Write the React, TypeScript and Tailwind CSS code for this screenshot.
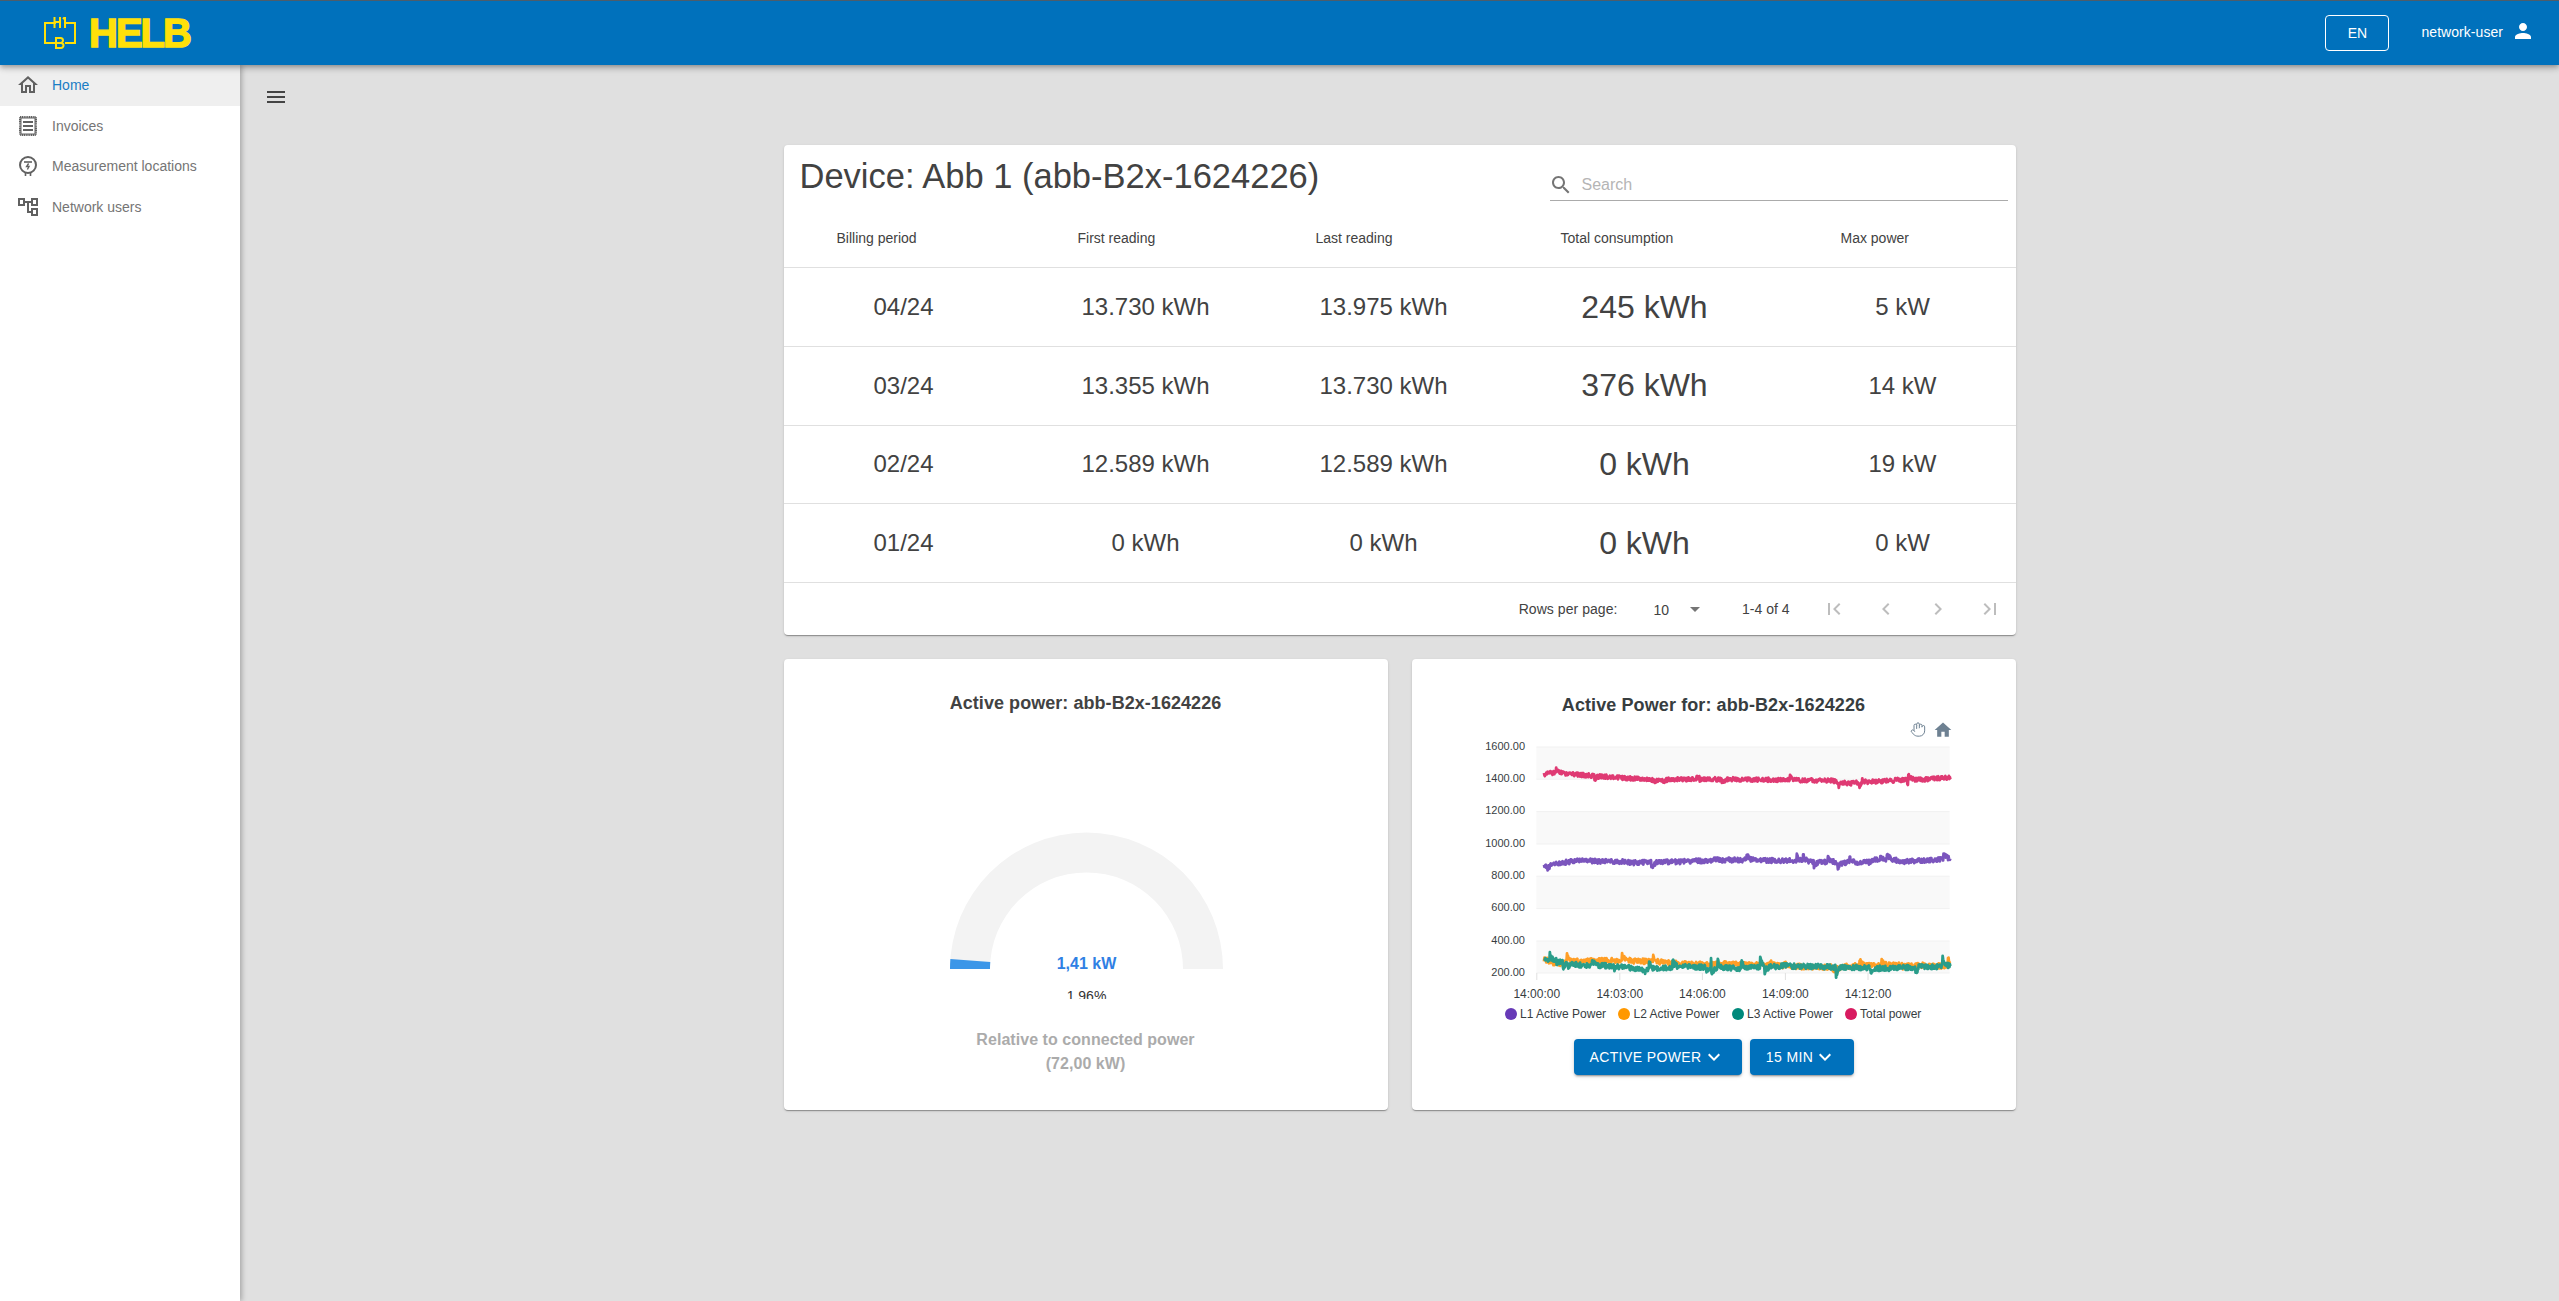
import { Hand } from "lucide-react";

const FONT = "font-['Liberation_Sans',Arial,sans-serif]";
const CARD_SHADOW = "shadow-[0_2px_1px_-1px_rgba(0,0,0,0.2),0_1px_1px_0_rgba(0,0,0,0.14),0_1px_3px_0_rgba(0,0,0,0.12)]";
const BTN_CLASS =
  "flex h-9 items-center justify-center rounded bg-[#0071bc] text-sm tracking-[0.4px] text-white shadow-[0_3px_1px_-2px_rgba(0,0,0,0.2),0_2px_2px_0_rgba(0,0,0,0.14),0_1px_5px_0_rgba(0,0,0,0.12)]";

const navItems = [
  { label: "Home", active: true, icon: "home" },
  { label: "Invoices", active: false, icon: "invoice" },
  { label: "Measurement locations", active: false, icon: "meter" },
  { label: "Network users", active: false, icon: "tree" },
];

const rows = [
  ["04/24", "13.730 kWh", "13.975 kWh", "245 kWh", "5 kW"],
  ["03/24", "13.355 kWh", "13.730 kWh", "376 kWh", "14 kW"],
  ["02/24", "12.589 kWh", "12.589 kWh", "0 kWh", "19 kW"],
  ["01/24", "0 kWh", "0 kWh", "0 kWh", "0 kW"],
];

const NavIcon = ({ name }: { name: string }) => {
  if (name === "home") {
    return (
      <svg width="24" height="24" viewBox="0 0 24 24" fill="#616161">
        <path d="M12 5.69l5 4.5V18h-2v-6H9v6H7v-7.81l5-4.5M12 3L2 12h3v8h6v-6h2v6h6v-8h3L12 3z" />
      </svg>
    );
  }
  if (name === "invoice") {
    return (
      <svg width="24" height="24" viewBox="0 0 24 24" fill="none" stroke="#616161">
        <rect x="4" y="3" width="16" height="18" strokeWidth="2" strokeDasharray="1.2 0.6" />
        <rect x="5" y="4" width="14" height="16" strokeWidth="1" />
        <path d="M7 8h10M7 12h10M7 16h10" strokeWidth="2" />
      </svg>
    );
  }
  if (name === "meter") {
    return (
      <svg width="24" height="24" viewBox="0 0 24 24" fill="none" stroke="#616161">
        <circle cx="12" cy="11" r="8" strokeWidth="2" />
        <path d="M8 8h8" strokeWidth="1.6" />
        <path d="M12.6 9.5l-2 3h2.4l-1.6 3" strokeWidth="1.4" />
        <path d="M9.5 19v3M14.5 19v3" strokeWidth="1.6" />
      </svg>
    );
  }
  return (
    <svg width="24" height="24" viewBox="0 0 24 24" fill="#616161">
      <path d="M22 11V3h-7v3H9V3H2v8h7V8h2v10h4v3h7v-8h-7v3h-2V8h2v3h7zM7 9H4V5h3v4zm10 6h3v4h-3v-4zm0-10h3v4h-3V5z" />
    </svg>
  );
};

const Logo = () => (
  <svg width="32" height="32" viewBox="0 0 32 32" fill="none" stroke="#ffe009" className="shrink-0">
    <path d="M12 6H1v20h10M21 26h10V6H20" strokeWidth="2" />
    <path d="M10.5 0v11M16 0v11M10.5 5H16M21 0v11M19 2l2-2" strokeWidth="2" />
    <path d="M12 21h4.5a2.2 2.2 0 0 1 0 5H12zM12 26h5a2.5 2.5 0 0 1 0 5h-5zM12 20v12" strokeWidth="2" />
  </svg>
);

const PagerIcon = ({ d }: { d: string }) => (
  <span className="flex w-[52px] justify-center">
    <svg width="24" height="24" viewBox="0 0 24 24" fill="#bdbdbd">
      <path d={d} />
    </svg>
  </span>
);

const ArrowDown = () => (
  <svg width="24" height="24" viewBox="0 0 24 24" fill="#ffffff">
    <path d="M7.41 8.59L12 13.17l4.59-4.58L18 10l-6 6-6-6 1.41-1.41z" />
  </svg>
);

// reference curves, read off the picture, with jitter laid over them
type Pt = [number, number];
const toPlot = ([zx, zy]: Pt): Pt => [1440 + zx / 2.904 - 1412, 680 + zy / 3 - 717];

const curves: { color: string; pts: Pt[]; seed: number; amp: number; spike: number }[] = [
  {
    color: "#7b55bd",
    seed: 11,
    amp: 2.4,
    spike: 22,
    pts: [[302, 560], [340, 552], [400, 540], [470, 545], [530, 545], [560, 548], [700, 545], [800, 540], [900, 540], [1000, 542], [1100, 545], [1230, 548], [1280, 535], [1350, 545], [1482, 535]],
  },
  {
    color: "#ff9e26",
    seed: 23,
    amp: 2.6,
    spike: 20,
    pts: [[302, 838], [340, 852], [400, 842], [550, 842], [620, 845], [700, 852], [850, 852], [1000, 858], [1100, 862], [1300, 855], [1482, 858]],
  },
  {
    color: "#2a9d8a",
    seed: 37,
    amp: 2.6,
    spike: 22,
    pts: [[302, 835], [350, 845], [400, 855], [520, 858], [590, 870], [700, 860], [860, 865], [1000, 858], [1200, 862], [1300, 865], [1482, 858]],
  },
  {
    color: "#df3a73",
    seed: 51,
    amp: 2.1,
    spike: 14,
    pts: [[302, 285], [320, 278], [400, 284], [480, 290], [560, 296], [620, 300], [700, 298], [850, 298], [1000, 300], [1140, 302], [1190, 310], [1250, 305], [1400, 298], [1482, 293]],
  },
];

const buildLine = (pts: Pt[], seed: number, amp: number, spikeSize: number) => {
  const plot = pts.map(toPlot);
  let state = seed * 7919;
  const rand = () => {
    state = (state * 16807) % 2147483647;
    return state / 2147483647;
  };
  const out: string[] = [];
  const x0 = plot[0][0];
  const x1 = plot[plot.length - 1][0];
  const steps = 900;
  let seg = 0;
  let spike = 0;
  for (let i = 0; i <= steps; i++) {
    const x = x0 + ((x1 - x0) * i) / steps;
    while (seg < plot.length - 2 && x > plot[seg + 1][0]) seg++;
    const [ax, ay] = plot[seg];
    const [bx, by] = plot[seg + 1];
    const base = ay + ((by - ay) * (x - ax)) / (bx - ax);
    if (rand() > 0.982) spike = (rand() - 0.5) * spikeSize;
    spike *= 0.8;
    const y = base + (rand() - 0.5) * amp * 2 + spike;
    out.push(`${x.toFixed(2)},${y.toFixed(2)}`);
  }
  return out.join(" ");
};

const lines = curves.map((c) => ({ color: c.color, points: buildLine(c.pts, c.seed, c.amp, c.spike) }));

const yLabels = ["1600.00", "1400.00", "1200.00", "1000.00", "800.00", "600.00", "400.00", "200.00"];
const gridYs = [30, 62.2, 94.6, 127, 159.2, 191.6, 224, 256];
const xTicks = [
  { x: 124.8, label: "14:00:00" },
  { x: 207.8, label: "14:03:00" },
  { x: 290.4, label: "14:06:00" },
  { x: 373.4, label: "14:09:00" },
  { x: 456, label: "14:12:00" },
];
const legend = [
  { cx: 99, tx: 108, color: "#673ab7", label: "L1 Active Power" },
  { cx: 212, tx: 221.5, color: "#ff9800", label: "L2 Active Power" },
  { cx: 326, tx: 335, color: "#00897b", label: "L3 Active Power" },
  { cx: 439, tx: 448, color: "#d81b60", label: "Total power" },
];

const LineChart = () => (
  <svg width="604" height="308" viewBox="0 0 604 308" className="block" fontFamily="'Liberation Sans', Arial, sans-serif">
    {gridYs.slice(0, -1).map((y, i) =>
      i % 2 === 0 ? <rect key={y} x="124.4" y={y} width="413.2" height={gridYs[i + 1] - y} fill="#f9f9f9" /> : null
    )}
    {gridYs.map((y) => (
      <line key={y} x1="124.4" x2="537.6" y1={y} y2={y} stroke="#f1f1f1" strokeWidth="1" />
    ))}
    {yLabels.map((label, i) => (
      <text key={label} x="113" y={gridYs[i] + 2.5} textAnchor="end" fontSize="11" fill="#373d3f">
        {label}
      </text>
    ))}
    {xTicks.map((t) => (
      <g key={t.label}>
        <line x1={t.x} x2={t.x} y1="256" y2="263" stroke="#e0e0e0" />
        <text x={t.x} y="281" textAnchor="middle" fontSize="12" fill="#373d3f">
          {t.label}
        </text>
      </g>
    ))}
    {lines.map((l) => (
      <polyline key={l.color} points={l.points} fill="none" stroke={l.color} strokeWidth="2.8" strokeLinejoin="round" />
    ))}
    {legend.map((l) => (
      <g key={l.label}>
        <circle cx={l.cx} cy="297" r="6" fill={l.color} />
        <text x={l.tx} y="301" fontSize="12" fill="#373d3f">
          {l.label}
        </text>
      </g>
    ))}
    <Hand x={498} y={4.5} width={16} height={16} stroke="#6e8192" strokeWidth={1.5} fill="#ffffff" />
    <svg x="521" y="3" width="20" height="20" viewBox="0 0 24 24" fill="#6e8192">
      <path d="M10 20v-6h4v6h5v-8h3L12 3 2 12h3v8z" />
    </svg>
  </svg>
);

const Gauge = () => {
  const cx = 302.5;
  const cy = 190;
  const R = 136.5;
  const r = 96.5;
  const angle = (4.2 * Math.PI) / 180;
  return (
    <svg width="604" height="220" viewBox="0 0 604 220" className="block" fontFamily="'Liberation Sans', Arial, sans-serif">
      <path d={`M${cx - R} ${cy}A${R} ${R} 0 0 1 ${cx + R} ${cy}L${cx + r} ${cy}A${r} ${r} 0 0 0 ${cx - r} ${cy}Z`} fill="#f3f3f3" />
      <path
        d={`M${cx - R} ${cy}A${R} ${R} 0 0 1 ${cx - R * Math.cos(angle)} ${cy - R * Math.sin(angle)}L${cx - r * Math.cos(angle)} ${cy - r * Math.sin(angle)}A${r} ${r} 0 0 0 ${cx - r} ${cy}Z`}
        fill="#3b96e8"
      />
      <text x={cx} y="190" textAnchor="middle" fontSize="16" fontWeight="700" fill="#2f80e4">
        1,41 kW
      </text>
      <text x={cx} y="222" textAnchor="middle" fontSize="14" fill="#333333">
        1,96%
      </text>
    </svg>
  );
};

const App = () => {
  return (
    <div className={`flex h-screen flex-col overflow-hidden bg-[#e0e0e0] ${FONT}`}>
      <header className="relative z-20 flex h-[65px] shrink-0 items-center border-t border-[#4d5d6b] bg-[#0071bc] shadow-[0_2px_4px_-1px_rgba(0,0,0,0.2),0_4px_5px_0_rgba(0,0,0,0.14),0_1px_10px_0_rgba(0,0,0,0.12)]">
        <div className="ml-[44px]">
          <Logo />
        </div>
        <span className="ml-[13px] text-[40px] leading-none font-bold tracking-[-2px] text-[#ffe009] [-webkit-text-stroke:1.4px_#ffe009]">
          HELB
        </span>
        <div className="ml-auto flex items-center">
          <button className="h-9 w-16 rounded border border-white text-sm text-white">EN</button>
          <span className="ml-[32px] pb-[2px] text-sm tracking-[0.05px] text-white">network-user</span>
          <span className="mr-[24px] ml-[8px] -translate-y-[2px]">
            <svg width="24" height="24" viewBox="0 0 24 24" fill="#ffffff">
              <path d="M12 12c2.21 0 4-1.79 4-4s-1.79-4-4-4-4 1.79-4 4 1.79 4 4 4zm0 2c-2.67 0-8 1.34-8 4v2h16v-2c0-2.66-5.33-4-8-4z" />
            </svg>
          </span>
        </div>
      </header>

      <div className="flex min-h-0 flex-1">
        <aside className="relative z-10 w-[240px] shrink-0 bg-white shadow-[2px_0_5px_rgba(0,0,0,0.25)]">
          {navItems.map((item) => (
            <div
              key={item.label}
              className={`flex h-[40.5px] items-center pl-[16px] text-sm ${item.active ? "bg-[#efefef] text-[#1a7dc4]" : "text-[#757575]"}`}
            >
              <NavIcon name={item.icon} />
              <span className="ml-[12px]">{item.label}</span>
            </div>
          ))}
        </aside>

        <main className="min-w-0 flex-1">
          <div className="pt-[20px] pl-[24px]">
            <svg width="24" height="24" viewBox="0 0 24 24" fill="#444444" className="block">
              <path d="M3 18h18v-2H3v2zm0-5h18v-2H3v2zm0-7v2h18V6H3z" />
            </svg>
          </div>

          <div className="mx-auto mt-[36px] w-[1232px]">
            <section className={`rounded bg-white text-[#424242] ${CARD_SHADOW}`}>
              <div className="flex h-[64px] items-start justify-between">
                <h1 className="pt-[11px] pl-[16px] text-[34.5px] leading-[40px] font-normal">Device: Abb 1 (abb-B2x-1624226)</h1>
                <div className="mt-[24px] mr-[8px] flex h-[32px] w-[458px] items-center border-b border-[#ababab]">
                  <svg width="24" height="24" viewBox="0 0 24 24" fill="#757575" className="-ml-[1px]">
                    <path d="M15.5 14h-.79l-.28-.27C15.41 12.59 16 11.11 16 9.5 16 5.91 13.09 3 9.5 3S3 5.91 3 9.5 5.91 16 9.5 16c1.61 0 3.09-.59 4.23-1.57l.27.28v.79l5 4.99L20.49 19l-4.99-5zm-6 0C7.01 14 5 11.99 5 9.5S7.01 5 9.5 5 14 7.01 14 9.5 11.99 14 9.5 14z" />
                  </svg>
                  <span className="ml-[9px] text-base text-[#b5b5b5]">Search</span>
                </div>
              </div>

              <div className="grid h-[59px] grid-cols-[240px_244px_232px_290px_226px] items-center border-b border-[#e0e0e0] text-sm">
                <div className="pl-[53px]">Billing period</div>
                <div className="pl-[54px]">First reading</div>
                <div className="pl-[48px]">Last reading</div>
                <div className="pl-[61px]">Total consumption</div>
                <div className="pl-[51px]">Max power</div>
              </div>

              {rows.map((row) => (
                <div
                  key={row[0]}
                  className="grid h-[78.75px] grid-cols-[240px_244px_232px_290px_226px] items-center border-b border-[#e0e0e0] text-center text-2xl"
                >
                  <div>{row[0]}</div>
                  <div>{row[1]}</div>
                  <div>{row[2]}</div>
                  <div className="text-[32px]">{row[3]}</div>
                  <div>{row[4]}</div>
                </div>
              ))}

              <div className="flex h-[52px] items-center justify-end text-sm">
                <span className="tracking-[0.05px]">Rows per page:</span>
                <span className="ml-[36px] pt-[2px]">10</span>
                <svg width="24" height="24" viewBox="0 0 24 24" fill="#757575" className="ml-[14px]">
                  <path d="M7 10l5 5 5-5z" />
                </svg>
                <span className="ml-[35px]">1-4 of 4</span>
                <span className="ml-[18px] flex">
                  <PagerIcon d="M18.41 16.59L13.82 12l4.59-4.59L17 6l-6 6 6 6zM6 6h2v12H6z" />
                  <PagerIcon d="M15.41 7.41L14 6l-6 6 6 6 1.41-1.41L10.83 12z" />
                  <PagerIcon d="M10 6L8.59 7.41 13.17 12l-4.58 4.59L10 18l6-6z" />
                  <PagerIcon d="M5.59 7.41L10.18 12l-4.59 4.59L7 18l6-6-6-6zM16 6h2v12h-2z" />
                </span>
              </div>
            </section>

            <div className="mt-[24px] grid grid-cols-2 gap-[24px]">
              <section className={`h-[451px] rounded bg-white ${CARD_SHADOW}`}>
                <h2 className="pt-[32px] text-center text-lg leading-[24px] font-bold tracking-[0.05px] text-[#424242]">Active power: abb-B2x-1624226</h2>
                <div className="mt-[64px]">
                  <Gauge />
                </div>
                <p className="mt-[29px] text-center text-base leading-[24px] font-bold tracking-[0.05px] text-[#ababab]">
                  Relative to connected power
                  <br />
                  (72,00 kW)
                </p>
              </section>

              <section className={`h-[451px] rounded bg-white ${CARD_SHADOW}`}>
                <h2 className="pt-[35px] text-center text-lg leading-[23px] font-bold tracking-[0.1px] text-[#373d3f]">Active Power for: abb-B2x-1624226</h2>
                <LineChart />
                <div className="mt-[14px] flex justify-center gap-2">
                  <button className={`w-[168px] ${BTN_CLASS}`}>
                    ACTIVE POWER
                    <ArrowDown />
                  </button>
                  <button className={`w-[104px] ${BTN_CLASS}`}>
                    15 MIN
                    <ArrowDown />
                  </button>
                </div>
              </section>
            </div>
          </div>
        </main>
      </div>
    </div>
  );
};

export default App;
